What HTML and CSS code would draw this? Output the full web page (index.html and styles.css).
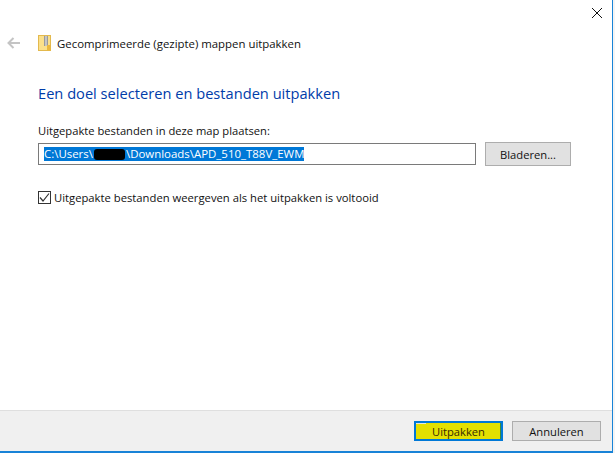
FILE: index.html
```html
<!DOCTYPE html>
<html lang="nl">
<head>
<meta charset="utf-8">
<title>Gecomprimeerde (gezipte) mappen uitpakken</title>
<link rel="stylesheet" href="styles.css">
</head>
<body>
<div class="window">
  <div class="titlebar">
    <svg class="close" width="12" height="12" viewBox="0 0 12 12"><path d="M1 1L11 11M11 1L1 11" stroke="#111" stroke-width="1" fill="none"/></svg>
  </div>
  <div class="nav">
    <svg class="back" width="14" height="12" viewBox="0 0 14 12"><path d="M13 6H2M6.5 1L1.5 6L6.5 11" stroke="#c4c4c4" stroke-width="2" fill="none"/></svg>
    <svg class="zip" width="13" height="16" viewBox="0 0 13 16">
      <rect x="0.5" y="0.5" width="12" height="15" fill="#fbe08a" stroke="#e3b94e"/>
      <rect x="6" y="1" width="4" height="10" fill="#9a9a9a"/>
      <path d="M7 2h2M7 4h2M7 6h2M7 8h2M7 10h2" stroke="#eee" stroke-width="1"/>
      <rect x="9" y="10" width="3.5" height="5.5" fill="#eab83f"/>
    </svg>
    <span class="nav-title">Gecomprimeerde (gezipte) mappen uitpakken</span>
  </div>
  <main class="content">
    <h1 class="heading">Een doel selecteren en bestanden uitpakken</h1>
    <label class="field-label" for="path">Uitgepakte bestanden in deze map plaatsen:</label>
    <div class="path-row">
      <div class="path-input" id="path">
        <span class="selection">C:\Users\<span class="redact"></span>\Downloads\APD_510_T88V_EWM</span>
      </div>
      <button class="btn browse" type="button">Bladeren...</button>
    </div>
    <div class="check-row">
      <span class="checkbox">
        <svg width="11" height="11" viewBox="0 0 11 11"><path d="M1 5.5L4 9L10 1.5" stroke="#333" stroke-width="1.2" fill="none"/></svg>
      </span>
      <span class="check-label">Uitgepakte bestanden weergeven als het uitpakken is voltooid</span>
    </div>
  </main>
  <footer class="footer">
    <button class="btn primary" type="button">Uitpakken</button>
    <button class="btn cancel" type="button">Annuleren</button>
  </footer>
</div>
</body>
</html>
```
FILE: styles.css
```css
html, body {
  margin: 0;
  padding: 0;
  background: #f4f4f4;
}
body {
  width: 615px;
  height: 453px;
  overflow: hidden;
  font-family: "Open Sans", "Noto Sans", sans-serif;
  font-size: 11.2px;
  color: #111;
}
.window {
  box-sizing: border-box;
  width: 613px;
  height: 453px;
  background: #fff;
  border-right: 1px solid #1883d7;
  border-bottom: 2px solid #1883d7;
  display: flex;
  flex-direction: column;
}
.titlebar {
  height: 34px;
  display: flex;
  justify-content: flex-end;
  align-items: flex-start;
  padding: 7px 9px 0 0;
  box-sizing: border-box;
}
.nav {
  height: 18px;
  display: flex;
  align-items: center;
  padding-left: 7px;
}
.zip {
  margin-left: 17px;
}
.nav-title {
  margin-left: 6px;
  font-size: 11.4px;
}
.content {
  flex: 1;
  padding: 0 38px;
  display: flex;
  flex-direction: column;
}
.heading {
  margin: 31px 0 0;
  font-size: 14.65px;
  font-weight: 400;
  line-height: 20px;
  color: #003caa;
}
.field-label {
  margin-top: 20px;
  line-height: 16px;
}
.path-row {
  display: flex;
  align-items: center;
  margin-top: 3px;
}
.path-input {
  box-sizing: border-box;
  width: 438px;
  height: 22px;
  border: 1px solid #7a7a7a;
  padding: 2px 5px;
  display: flex;
  align-items: center;
  font-size: 11.45px;
}
.selection {
  display: flex;
  align-items: center;
  background: #0078d7;
  color: #fff;
  line-height: 14px;
  white-space: nowrap;
}
.redact {
  display: block;
  width: 31px;
  height: 11px;
  margin: 0 1px;
  background: #000;
  border-radius: 3px;
}
.btn {
  box-sizing: border-box;
  font: inherit;
  color: #111;
  background: #e1e1e1;
  border: 1px solid #adadad;
  padding: 0;
}
.browse {
  width: 86px;
  height: 24px;
  margin-left: 9px;
}
.check-row {
  display: flex;
  align-items: center;
  margin-top: 24px;
}
.checkbox {
  box-sizing: border-box;
  width: 13px;
  height: 13px;
  border: 1px solid #333;
  background: #fff;
  display: flex;
  align-items: center;
  justify-content: center;
}
.check-label {
  margin-left: 3px;
  font-size: 11.25px;
}
.footer {
  box-sizing: border-box;
  height: 41px;
  background: #f0f0f0;
  border-top: 1px solid #dfdfdf;
  display: flex;
  justify-content: flex-end;
  align-items: flex-start;
  padding: 10px 11px 0 0;
}
.primary {
  position: relative;
  width: 89px;
  height: 20px;
  background: #e3e000;
  border: 2px solid #0078d7;
  box-shadow: inset -1px 0 0 #3c8c3c;
  color: #3a2a00;
}
.primary::before {
  content: "";
  position: absolute;
  top: 0;
  left: 0;
  width: 10px;
  height: 1px;
  background: #dfe8e0;
}
.cancel {
  width: 89px;
  height: 20px;
  margin-left: 9px;
}
```
